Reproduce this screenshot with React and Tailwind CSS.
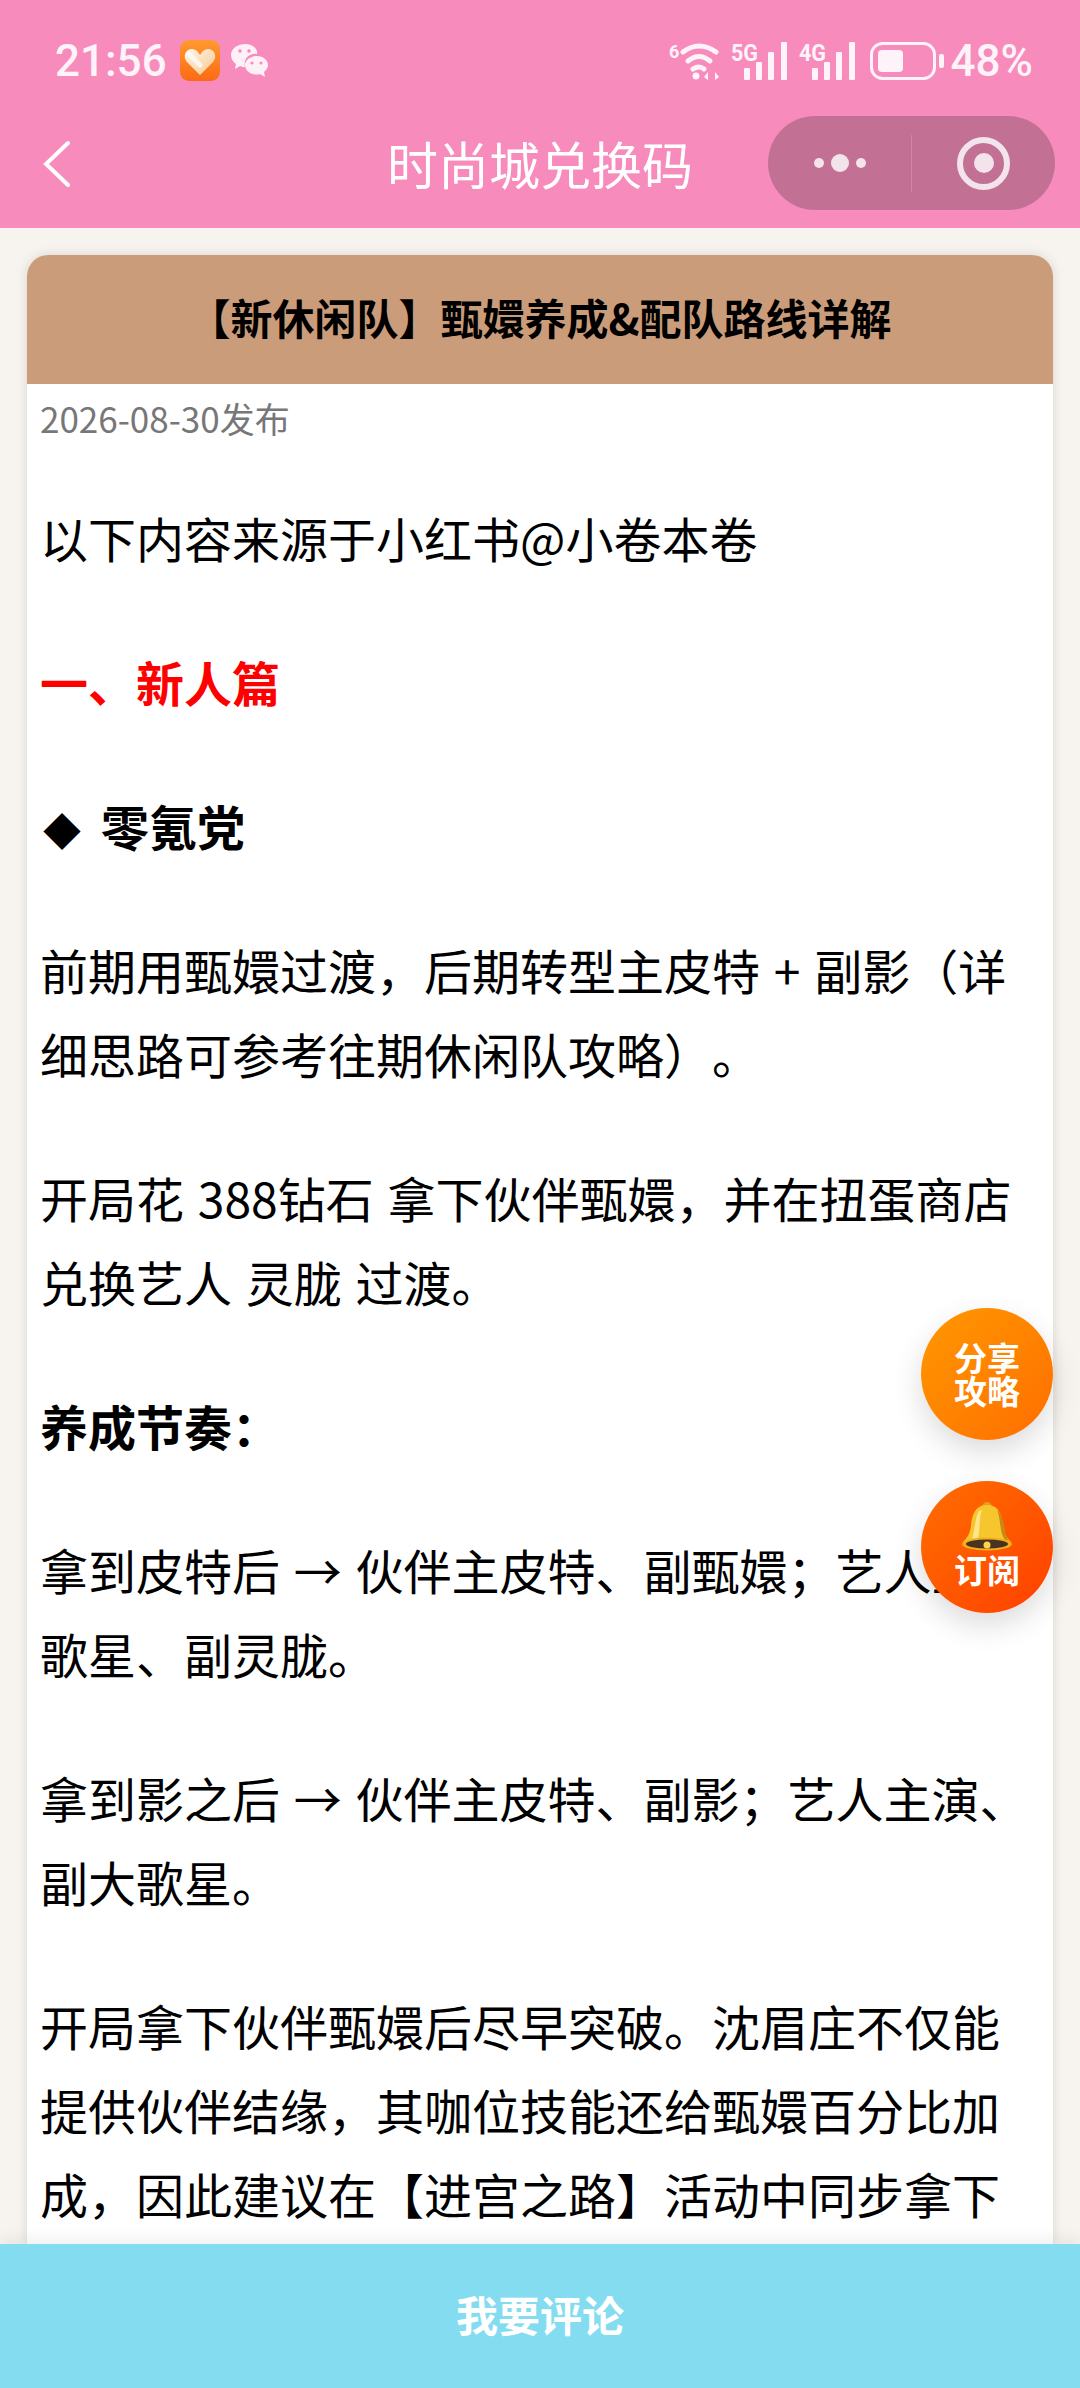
import React from 'react';

const cjk = { fontFamily: '"Noto Sans CJK SC", "Noto Sans", sans-serif' };

const paragraphs = [
    { text: '以下内容来源于小红书@小卷本卷' },
    { text: '一、新人篇', className: 'font-bold text-[#ff0000]' },
    { text: '零氪党', className: 'font-bold', marker: true },
    { text: '前期用甄嬛过渡，后期转型主皮特 + 副影（详细思路可参考往期休闲队攻略）。' },
    { text: '开局花 388钻石 拿下伙伴甄嬛，并在扭蛋商店兑换艺人 灵胧 过渡。' },
    { text: '养成节奏：', className: 'font-bold' },
    { text: '拿到皮特后 → 伙伴主皮特、副甄嬛；艺人主大歌星、副灵胧。' },
    { text: '拿到影之后 → 伙伴主皮特、副影；艺人主演、副大歌星。' },
    { text: '开局拿下伙伴甄嬛后尽早突破。沈眉庄不仅能提供伙伴结缘，其咖位技能还给甄嬛百分比加成，因此建议在【进宫之路】活动中同步拿下' },
];

// 信号格：前面的小字加四根柱子
const Signal = ({ label }) => (
    <svg width="58" height="40" viewBox="0 0 58 40" fill="#fdf3f8">
        <text x="0" y="20" fontSize="23" fontWeight="700" fontFamily="Roboto, sans-serif" textLength="27" lengthAdjust="spacingAndGlyphs">{label}</text>
        <rect x="13" y="27" width="6" height="12" rx="1" />
        <rect x="25" y="21" width="6" height="18" rx="1" />
        <rect x="37" y="11" width="6" height="28" rx="1" />
        <rect x="50" y="1" width="6" height="38" rx="1" />
    </svg>
);

const Wifi = () => (
    <svg width="52" height="40" viewBox="0 0 52 40" fill="none" stroke="#fdf3f8" strokeWidth="5" strokeLinecap="round">
        <text x="0" y="17" fontSize="18" fontWeight="700" fontFamily="Roboto, sans-serif" fill="#fdf3f8" stroke="none">6</text>
        <path d="M14 11 Q30 -1 47 11" />
        <path d="M19 20 Q30 11 41 20" />
        <path d="M24 28 Q30 24 35 28" />
        <circle cx="27" cy="35" r="3.5" fill="#fdf3f8" stroke="none" />
        <path d="M39 39 V31 L35 36 Z M46 39 V31 L50 36 Z" fill="#fdf3f8" stroke="none" />
    </svg>
);

const Battery = () => (
    <svg width="76" height="38" viewBox="0 0 76 38" fill="#fdf3f8">
        <rect x="1.5" y="1.5" width="63" height="35" rx="11" fill="none" stroke="#fdf3f8" strokeWidth="3" />
        <rect x="8" y="8" width="25" height="22" rx="4" />
        <rect x="69" y="12" width="5" height="14" rx="2" />
    </svg>
);

const HealthIcon = () => (
    <svg width="40" height="41" viewBox="0 0 40 41">
        <defs>
            <linearGradient id="tile" x1="0" y1="0" x2="0" y2="1">
                <stop offset="0" stopColor="#ff9a2e" />
                <stop offset="1" stopColor="#fb6a16" />
            </linearGradient>
            <linearGradient id="heart" x1="0" y1="0" x2="1" y2="1">
                <stop offset="0" stopColor="#fff6ec" />
                <stop offset="1" stopColor="#f7c88e" />
            </linearGradient>
        </defs>
        <rect width="40" height="41" rx="9" fill="url(#tile)" />
        <path d="M20 35 L7 22 C2 16 6 9 12 9 C15 9 18 11 20 15 C22 11 25 9 28 9 C34 9 38 16 33 22 Z" fill="url(#heart)" />
        <path d="M9 14 L20 25" stroke="#fff" strokeWidth="5" strokeLinecap="round" opacity="0.7" />
    </svg>
);

const WeChatIcon = () => (
    <svg width="37" height="33" viewBox="0 0 37 33" fill="#fdf1f7">
        <path d="M14 0 C22 0 27 5 26 10 C19 9 12 14 14 23 C12 23 11 23 9 22 L4 25 L5 20 C2 18 0 15 0 11 C0 5 6 0 14 0 Z" />
        <path d="M26 12 C32 12 37 16 37 21 C37 24 35 26 33 28 L34 33 L29 30 C22 32 14 28 14 21 C14 16 20 12 26 12 Z" />
        <circle cx="9" cy="7" r="1.8" fill="#f78cbc" />
        <circle cx="18" cy="7" r="1.8" fill="#f78cbc" />
        <circle cx="21" cy="19" r="1.6" fill="#f78cbc" />
        <circle cx="30" cy="19" r="1.6" fill="#f78cbc" />
    </svg>
);

const Bell = () => (
    <svg width="52" height="50" viewBox="0 0 52 50">
        <circle cx="26" cy="5" r="5" fill="#e0a020" />
        <path d="M26 3 C14 3 11 13 10 24 C9 32 6 36 2 40 H50 C46 36 43 32 42 24 C41 13 38 3 26 3 Z" fill="#f7c52d" />
        <path d="M18 9 C14 15 14 28 11 37 H17 C19 28 18 16 21 8 Z" fill="#fde68a" />
        <path d="M36 8 C40 16 38 30 44 38 L48 39 C43 34 44 14 36 8 Z" fill="#c98a12" />
        <ellipse cx="26" cy="42" rx="25" ry="6.5" fill="#f2b01e" />
        <ellipse cx="26" cy="42" rx="21" ry="4.5" fill="#4a3320" />
        <circle cx="26" cy="43" r="3.5" fill="#fcd34d" />
    </svg>
);

export default function App() {
    return (
        <div className="relative flex h-[2388px] w-[1080px] flex-col overflow-hidden bg-[#f7f3ee] text-black" style={cjk}>
            <header className="h-[228px] shrink-0 bg-[#f78cbc] text-white">
                <div className="flex h-[116px] items-start justify-between pl-[55px] pr-[47px] pt-[39px]">
                    <div className="flex items-center">
                        <span className="pt-[2px] font-['Roboto'] text-[44px] font-medium leading-[41px] text-[#fdf3f8]">21:56</span>
                        <span className="ml-[13px] flex"><HealthIcon /></span>
                        <span className="ml-[11px] flex"><WeChatIcon /></span>
                    </div>
                    <div className="flex items-center">
                        <Wifi />
                        <span className="ml-[10px] flex"><Signal label="5G" /></span>
                        <span className="ml-[10px] flex"><Signal label="4G" /></span>
                        <span className="ml-[13px] flex"><Battery /></span>
                        <span className="ml-[5px] pt-[2px] font-['Roboto'] text-[44px] font-medium leading-[41px] text-[#fdf3f8]">48%</span>
                    </div>
                </div>
                <nav className="relative flex h-[94px] items-center justify-center">
                    <svg className="absolute left-[43px] top-[24px]" width="28" height="48" viewBox="0 0 28 48" fill="none" stroke="#fff" strokeWidth="4" strokeLinecap="round">
                        <path d="M25 3 L3 24 L25 45" />
                    </svg>
                    <h1 className="text-[51px] font-normal leading-none">时尚城兑换码</h1>
                    <div className="absolute right-[25px] top-0 flex h-[94px] w-[287px] items-center rounded-full bg-[#c37095]">
                        <div className="flex w-[143px] items-center justify-center gap-[7px]">
                            <span className="h-[10px] w-[10px] rounded-full bg-[#f3e3eb]" />
                            <span className="h-[18px] w-[18px] rounded-full bg-[#f3e3eb]" />
                            <span className="h-[10px] w-[10px] rounded-full bg-[#f3e3eb]" />
                        </div>
                        <div className="h-[57px] w-px bg-[#d184a7]" />
                        <div className="flex flex-1 items-center justify-center">
                            <div className="flex h-[53px] w-[53px] items-center justify-center rounded-full border-[6px] border-[#f3e3eb]">
                                <span className="h-[20px] w-[20px] rounded-full bg-[#f3e3eb]" />
                            </div>
                        </div>
                    </div>
                </nav>
            </header>

            <main className="min-h-0 flex-1 overflow-hidden px-[27px] pt-[27px]">
                <article className="min-h-full rounded-t-[21px] bg-white shadow-[0_0_12px_rgba(0,0,0,0.12)]">
                    <h2 className="flex h-[129px] items-center justify-center rounded-t-[21px] bg-[#cb9c79] pb-[6px] text-[42px] font-bold">【新休闲队】甄嬛养成&配队路线详解</h2>
                    <div className="px-[13px]">
                        <p className="pt-[10px] text-[35px] leading-[48px] text-[#777777]">2026-08-30发布</p>
                        <div className="flex flex-col gap-[60px] pt-[53px]">
                            {paragraphs.map((item, index) => (
                                <p key={index} className={`text-[48px] leading-[84px] [text-spacing-trim:space-all] [word-spacing:3px] ${item.className || ''}`}>
                                    {item.marker && <span className="ml-[3px] mr-[20px] text-[38px] font-normal leading-none">◆</span>}
                                    {item.text}
                                </p>
                            ))}
                        </div>
                    </div>
                </article>
            </main>

            <footer className="relative flex h-[144px] shrink-0 items-center justify-center bg-[#84dcf1] pb-[6px] text-[42px] font-bold text-white shadow-[0_-6px_14px_rgba(0,0,0,0.06)]">我要评论</footer>

            <button className="absolute left-[921px] top-[1308px] flex h-[132px] w-[132px] items-center justify-center rounded-full bg-gradient-to-br from-[#ff9800] to-[#ff6d00] text-center text-[33px] font-bold leading-[33px] text-white shadow-[0_12px_30px_rgba(0,0,0,0.14)]">
                分享<br />攻略
            </button>
            <button className="absolute left-[921px] top-[1481px] flex h-[132px] w-[132px] flex-col items-center justify-center rounded-full bg-gradient-to-br from-[#ff6d00] to-[#ff3d00] pb-[6px] text-center text-[33px] font-bold leading-[35px] text-white shadow-[0_12px_30px_rgba(0,0,0,0.14)]">
                <Bell />
                <span>订阅</span>
            </button>
        </div>
    );
}
